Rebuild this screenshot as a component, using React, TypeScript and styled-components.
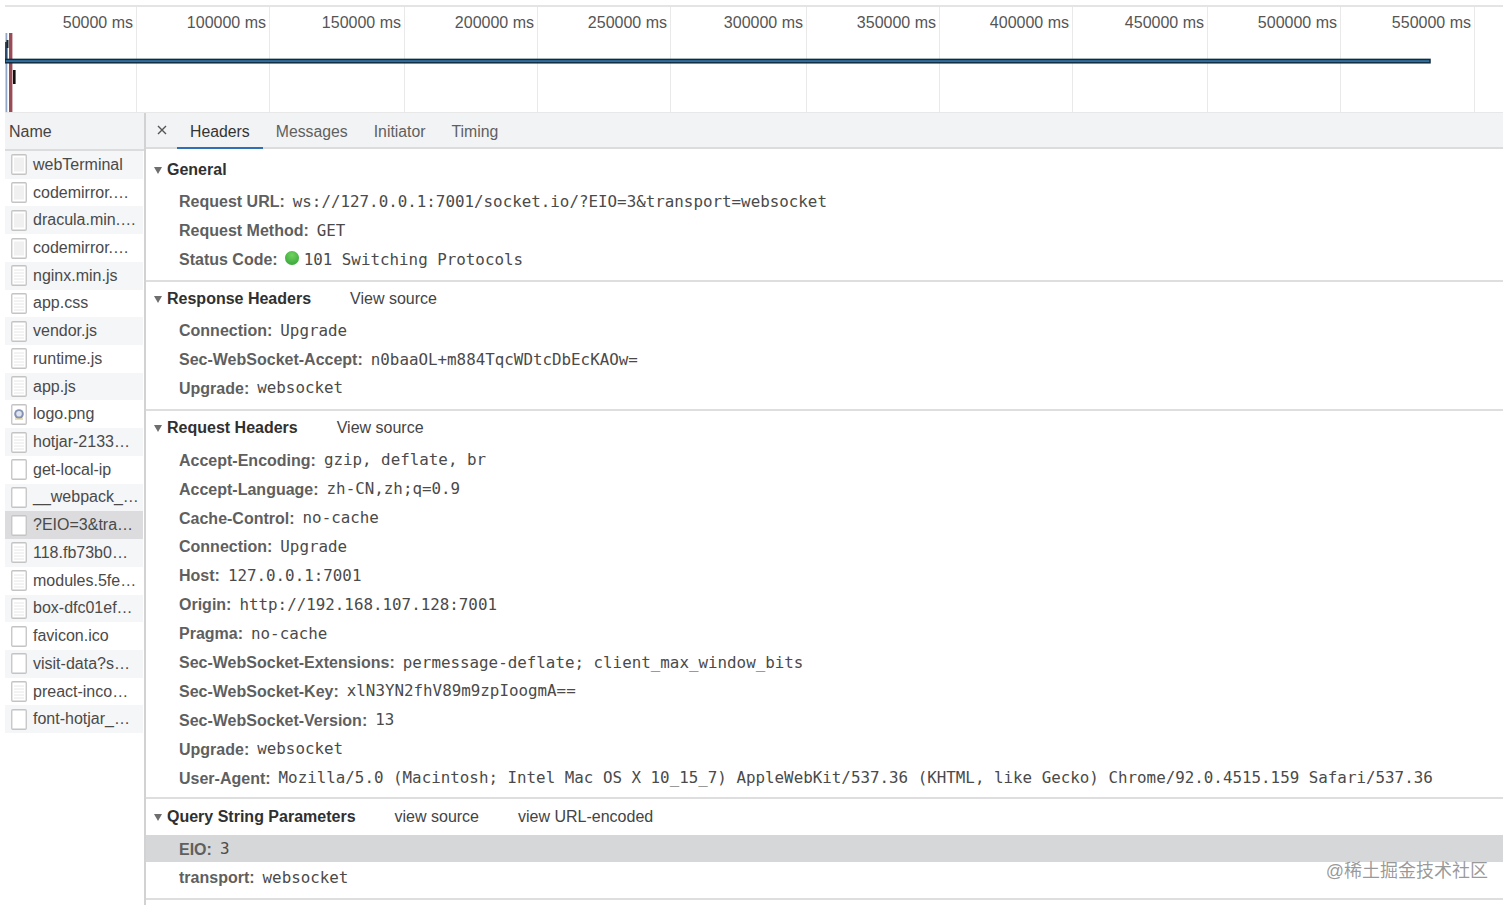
import React from 'react'
import styled, { createGlobalStyle } from 'styled-components'

const GlobalStyle = createGlobalStyle`
  html, body {
    margin: 0;
    background: #fff;
  }
  body {
    font-family: "Liberation Sans", Arial, sans-serif;
    color: #333;
    overflow: hidden;
  }
`

const Page = styled.div`
  width: 1498px;
  height: 905px;
  margin-left: 5px;
  position: relative;
  overflow: hidden;
`

const Timeline = styled.div`
  position: relative;
  display: flex;
  height: 108px;
  margin-top: 5px;
  border-top: 2px solid #e4e4e4;
  border-bottom: 1px solid #e8e8e8;
  box-sizing: border-box;
`

const TickCell = styled.div<{ $w: number }>`
  width: ${({ $w }) => $w}px;
  flex: none;
  box-sizing: border-box;
  border-right: 1px solid #e9e9e9;
  padding: 7px 3px 0 0;
  text-align: right;
  font-size: 16px;
  line-height: 18px;
  color: #555;
`

const Waterfall = styled.svg`
  position: absolute;
  left: 0;
  top: 0;
  width: 1498px;
  height: 106px;
`

const Panels = styled.div`
  display: flex;
  height: 792px;
`

const NameColumn = styled.div`
  width: 139px;
  flex: none;
  border-right: 2px solid #d2d2d2;
`

const NameHeader = styled.div`
  height: 38px;
  box-sizing: border-box;
  background: #f2f3f4;
  border-bottom: 2px solid #dcdcdc;
  padding-left: 4px;
  font-size: 16px;
  line-height: 38px;
  color: #444;
`

const FileRow = styled.div<{ $odd: boolean; $selected: boolean }>`
  display: flex;
  align-items: center;
  gap: 6px;
  height: 27.73px;
  width: 138px;
  box-sizing: border-box;
  padding-left: 6px;
  font-size: 16px;
  color: #4a4a4a;
  background: ${({ $odd, $selected }) => ($selected ? '#dcdcde' : $odd ? '#f5f6f7' : '#fff')};
`

const FileName = styled.span`
  white-space: nowrap;
`

const Details = styled.div`
  flex: 1;
  min-width: 0;
`

const TabBar = styled.div`
  display: flex;
  align-items: stretch;
  height: 36px;
  box-sizing: border-box;
  background: #f2f3f4;
  border-bottom: 2px solid #dcdcdc;
  padding-left: 11px;
`

const CloseButton = styled.span`
  display: flex;
  align-items: center;
  width: 20px;
  color: #555;
`

const Tab = styled.div<{ $active?: boolean }>`
  display: flex;
  align-items: center;
  padding: 3px 13px 0;
  margin-bottom: -2px;
  font-size: 15.8px;
  color: ${({ $active }) => ($active ? '#333' : '#5f5f5f')};
  border-bottom: 2px solid ${({ $active }) => ($active ? '#2f6fb5' : 'transparent')};
`

const Section = styled.section<{ $bottom?: number }>`
  border-bottom: 2px solid #dedede;
  padding-bottom: ${({ $bottom }) => $bottom ?? 6}px;
`

const SectionHeading = styled.div<{ $height: number; $top?: number }>`
  display: flex;
  align-items: center;
  box-sizing: border-box;
  height: ${({ $height }) => $height}px;
  padding: ${({ $top }) => $top ?? 0}px 0 0 8px;
  font-size: 16px;
  color: #333;
`

const Caret = styled.span`
  width: 0;
  height: 0;
  margin: 1px 5px 0 0;
  border-left: 4.5px solid transparent;
  border-right: 4.5px solid transparent;
  border-top: 7px solid #6e6e6e;
`

const HeadingTitle = styled.strong`
  font-weight: 700;
  color: #303030;
`

const SourceLink = styled.span`
  margin-left: 39px;
  color: #444;
`

const Row = styled.div<{ $highlight?: boolean; $height?: number }>`
  display: flex;
  align-items: center;
  height: ${({ $height }) => $height ?? 28.9}px;
  padding-left: 33px;
  white-space: nowrap;
  background: ${({ $highlight }) => ($highlight ? '#d6d7d8' : 'transparent')};
`

const Key = styled.span`
  font-size: 16px;
  font-weight: 700;
  color: #5f5f5f;
  margin-right: 8px;
  padding-top: 2px;
`

const Value = styled.span`
  font-family: "DejaVu Sans Mono", "Liberation Mono", monospace;
  font-size: 15.85px;
  color: #4a4a4a;
`

const StatusDot = styled.span`
  width: 14px;
  height: 14px;
  margin: 0 5px 2px -1px;
  border-radius: 50%;
  background: radial-gradient(circle at 50% 30%, #6fd25e, #2f9e35);
`

const Watermark = styled.div`
  position: absolute;
  right: 15px;
  bottom: 23px;
  font-family: "Liberation Sans", "Noto Sans CJK SC", sans-serif;
  font-size: 18px;
  color: rgba(120, 120, 120, 0.75);
`

const ticks = [
  { label: '50000 ms', w: 132 },
  { label: '100000 ms', w: 133 },
  { label: '150000 ms', w: 135 },
  { label: '200000 ms', w: 133 },
  { label: '250000 ms', w: 133 },
  { label: '300000 ms', w: 136 },
  { label: '350000 ms', w: 133 },
  { label: '400000 ms', w: 133 },
  { label: '450000 ms', w: 135 },
  { label: '500000 ms', w: 133 },
  { label: '550000 ms', w: 134 },
]

type FileKind = 'thumb' | 'doc' | 'blank' | 'image'

const files: { name: string; kind: FileKind }[] = [
  { name: 'webTerminal', kind: 'thumb' },
  { name: 'codemirror.…', kind: 'thumb' },
  { name: 'dracula.min.…', kind: 'thumb' },
  { name: 'codemirror.…', kind: 'thumb' },
  { name: 'nginx.min.js', kind: 'doc' },
  { name: 'app.css', kind: 'doc' },
  { name: 'vendor.js', kind: 'doc' },
  { name: 'runtime.js', kind: 'doc' },
  { name: 'app.js', kind: 'doc' },
  { name: 'logo.png', kind: 'image' },
  { name: 'hotjar-2133…', kind: 'doc' },
  { name: 'get-local-ip', kind: 'blank' },
  { name: '__webpack_…', kind: 'blank' },
  { name: '?EIO=3&tra…', kind: 'blank' },
  { name: '118.fb73b0…', kind: 'doc' },
  { name: 'modules.5fe…', kind: 'doc' },
  { name: 'box-dfc01ef…', kind: 'doc' },
  { name: 'favicon.ico', kind: 'blank' },
  { name: 'visit-data?s…', kind: 'blank' },
  { name: 'preact-inco…', kind: 'doc' },
  { name: 'font-hotjar_…', kind: 'blank' },
]

const general = [
  ['Request URL:', 'ws://127.0.0.1:7001/socket.io/?EIO=3&transport=websocket'],
  ['Request Method:', 'GET'],
]

const responseHeaders = [
  ['Connection:', 'Upgrade'],
  ['Sec-WebSocket-Accept:', 'n0baaOL+m884TqcWDtcDbEcKAOw='],
  ['Upgrade:', 'websocket'],
]

const requestHeaders = [
  ['Accept-Encoding:', 'gzip, deflate, br'],
  ['Accept-Language:', 'zh-CN,zh;q=0.9'],
  ['Cache-Control:', 'no-cache'],
  ['Connection:', 'Upgrade'],
  ['Host:', '127.0.0.1:7001'],
  ['Origin:', 'http://192.168.107.128:7001'],
  ['Pragma:', 'no-cache'],
  ['Sec-WebSocket-Extensions:', 'permessage-deflate; client_max_window_bits'],
  ['Sec-WebSocket-Key:', 'xlN3YN2fhV89m9zpIoogmA=='],
  ['Sec-WebSocket-Version:', '13'],
  ['Upgrade:', 'websocket'],
  [
    'User-Agent:',
    'Mozilla/5.0 (Macintosh; Intel Mac OS X 10_15_7) AppleWebKit/537.36 (KHTML, like Gecko) Chrome/92.0.4515.159 Safari/537.36',
  ],
]

function FileIcon({ kind }: { kind: FileKind }) {
  return (
    <svg width="16" height="21" viewBox="0 0 16 21" style={{ flex: 'none' }}>
      <rect x="0.75" y="0.75" width="14.5" height="19.5" rx="1" fill="#fff" stroke="#c4c4c4" strokeWidth="1.3" />
      {kind === 'thumb' && <rect x="3" y="3.5" width="10" height="14" fill="#f0f0f0" />}
      {kind === 'doc' && (
        <path d="M3 5h10M3 8h10M3 11h10M3 14h10M3 17h10" stroke="#e6e6e6" strokeWidth="1" />
      )}
      {kind === 'image' && (
        <g>
          <circle cx="8" cy="10" r="4.8" fill="#8492b4" />
          <circle cx="8" cy="9.8" r="2.8" fill="#dfe4ee" />
          <path d="M4 15h8" stroke="#d9c98a" strokeWidth="1.2" />
        </g>
      )}
    </svg>
  )
}

function KeyValue({ name, value, height }: { name: string; value: string; height?: number }) {
  return (
    <Row $height={height}>
      <Key>{name}</Key>
      <Value>{value}</Value>
    </Row>
  )
}

export default function App() {
  return (
    <Page>
      <GlobalStyle />
      <Timeline>
        {ticks.map(t => (
          <TickCell key={t.label} $w={t.w}>
            {t.label}
          </TickCell>
        ))}
        <Waterfall viewBox="0 0 1498 106">
          <rect x="0.5" y="26" width="1.8" height="79" fill="#8fa6c4" />
          <rect x="4" y="26" width="3.4" height="79" fill="#9a4b58" />
          <rect x="0" y="35" width="2.5" height="18" fill="#2b4a6e" />
          <rect x="1.5" y="33" width="2" height="8" fill="#222" />
          <rect x="8" y="63" width="2.6" height="14" fill="#111" />
          <rect x="0" y="52.4" width="1425" height="3.4" fill="#2f6f9f" stroke="#0f2b3f" strokeWidth="1.5" />
        </Waterfall>
      </Timeline>
      <Panels>
        <NameColumn>
          <NameHeader>Name</NameHeader>
          {files.map((f, i) => (
            <FileRow key={f.name + i} $odd={i % 2 === 0} $selected={f.name.startsWith('?EIO')}>
              <FileIcon kind={f.kind} />
              <FileName>{f.name}</FileName>
            </FileRow>
          ))}
        </NameColumn>
        <Details>
          <TabBar>
            <CloseButton>
              <svg width="10" height="10" viewBox="0 0 10 10">
                <path d="M1 1l8 8M9 1l-8 8" stroke="#555" strokeWidth="1.4" />
              </svg>
            </CloseButton>
            <Tab $active>Headers</Tab>
            <Tab>Messages</Tab>
            <Tab>Initiator</Tab>
            <Tab>Timing</Tab>
          </TabBar>
          <Section>
            <SectionHeading $height={38} $top={3}>
              <Caret />
              <HeadingTitle>General</HeadingTitle>
            </SectionHeading>
            {general.map(([k, v]) => (
              <KeyValue key={k} name={k} value={v} />
            ))}
            <Row>
              <Key>Status Code:</Key>
              <StatusDot />
              <Value>101 Switching Protocols</Value>
            </Row>
          </Section>
          <Section $bottom={7}>
            <SectionHeading $height={34}>
              <Caret />
              <HeadingTitle>Response Headers</HeadingTitle>
              <SourceLink>View source</SourceLink>
            </SectionHeading>
            {responseHeaders.map(([k, v]) => (
              <KeyValue key={k} name={k} value={v} />
            ))}
          </Section>
          <Section $bottom={5}>
            <SectionHeading $height={34}>
              <Caret />
              <HeadingTitle>Request Headers</HeadingTitle>
              <SourceLink>View source</SourceLink>
            </SectionHeading>
            {requestHeaders.map(([k, v]) => (
              <KeyValue key={k} name={k} value={v} />
            ))}
          </Section>
          <Section>
            <SectionHeading $height={36}>
              <Caret />
              <HeadingTitle>Query String Parameters</HeadingTitle>
              <SourceLink>view source</SourceLink>
              <SourceLink>view URL-encoded</SourceLink>
            </SectionHeading>
            <Row $highlight $height={27}>
              <Key>EIO:</Key>
              <Value>3</Value>
            </Row>
            <KeyValue name="transport:" value="websocket" height={30} />
          </Section>
        </Details>
      </Panels>
      <Watermark>@稀土掘金技术社区</Watermark>
    </Page>
  )
}
